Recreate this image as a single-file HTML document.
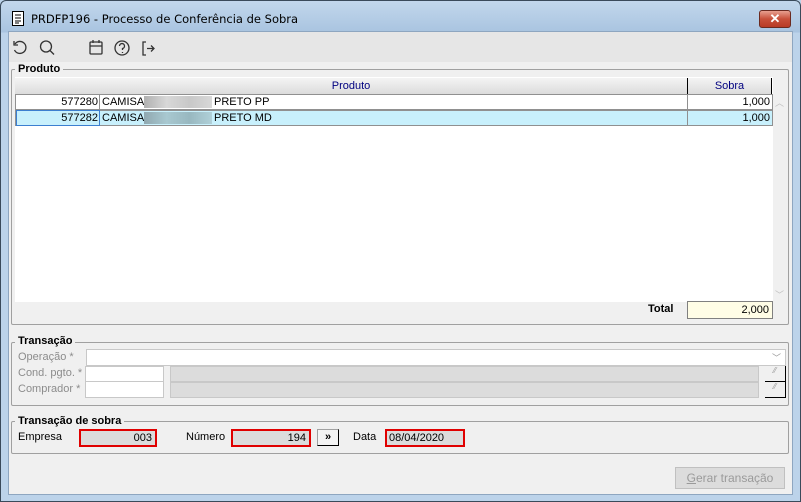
<!DOCTYPE html>
<html><head><meta charset="utf-8"><style>
*{box-sizing:border-box;margin:0;padding:0}
body{width:801px;height:502px;overflow:hidden;background:#bcd3ea;font-family:"Liberation Sans",sans-serif;font-size:11px;color:#000;position:relative}
.a{position:absolute}
.win{left:0;top:0;width:801px;height:502px;border:1px solid #3a4a5a;border-radius:6px 6px 0 0;background:linear-gradient(#c2d7ec,#a9c4e0 31px,#bcd3ea 32px)}
.client{left:8px;top:31px;width:785px;height:464px;background:#f0f0f0;border:1px solid #8ea6c0}
.tb{left:9px;top:32px;width:783px;height:30px;background:#e6e6e6}
.grp{border:1px solid #a0a0a0;border-radius:2px}
.lg{background:#f0f0f0;font-weight:bold;padding:0 3px;font-size:11px}
.lbl{color:#8c8c8c}
.in{background:#fff;border:1px solid #c8c8c8}
.gr{background:#dcdcdc;border:1px solid #c8c8c8}
.red{border:2px solid #e00000;background:#dcdcdc;text-align:right;padding:1px 3px 0 0;line-height:13px}
</style></head><body>
<div class="a win"></div>
<svg class="a" style="left:12px;top:11px" width="12" height="15"><rect x="0.5" y="0.5" width="11" height="14" fill="#fff" stroke="#000"/><path d="M3 4h6M3 7h6M3 10h6M3 12h4" stroke="#000"/></svg>
<div class="a" style="left:31px;top:12px;font-size:12px;color:#000;font-family:'DejaVu Sans',sans-serif;font-size:11.5px">PRDFP196 - Processo de Conferência de Sobra</div>
<div class="a" style="left:759px;top:10px;width:32px;height:18px;border:1px solid #6b2a20;border-radius:3px;background:linear-gradient(#e8a090,#c8503a 50%,#b83a25);color:#fff;font-weight:bold;text-align:center;font-size:13px;line-height:16px">✕</div>
<div class="a client"></div>
<div class="a tb"></div>
<svg class="a" style="left:12px;top:39px" width="150" height="18" fill="none" stroke="#333" stroke-width="1.3">
<path d="M3 5 A6 6 0 1 1 2.5 11"/><path d="M2 2v4h4"/>
<circle cx="34" cy="7.5" r="5.5"/><path d="M38 11.5l4 4"/>
<rect x="78" y="3" width="12" height="12" rx="1"/><path d="M78 7h12M81 1v3M87 1v3"/>
<circle cx="110" cy="9" r="7"/><path d="M107.5 7a2.5 2.5 0 1 1 3 2.5v1.5M110.5 13v1"/>
<path d="M134 3h-3v13h3M135 9.5h7M139 6.5l3 3-3 3"/>
</svg>
<div class="a grp" style="left:11px;top:69px;width:778px;height:256px"></div>
<div class="a lg" style="left:15px;top:63px">Produto</div>
<div class="a" style="left:15px;top:77px;width:758px;height:225px;background:#fff"></div>
<div class="a" style="left:15px;top:78px;width:673px;height:16px;background:linear-gradient(#f4f4f4,#dcdcdc);border-right:1px solid #000;color:#000080;text-align:center;line-height:16px">Produto</div>
<div class="a" style="left:688px;top:78px;width:84px;height:16px;background:linear-gradient(#f4f4f4,#dcdcdc);border-right:1px solid #000;color:#000080;text-align:center;line-height:16px">Sobra</div>
<div class="a" style="left:15px;top:94px;width:758px;height:16px;border:1px solid #909090;background:#fff"></div>
<div class="a" style="left:15px;top:110px;width:758px;height:16px;border:1px solid #909090;background:#c8f0fc"></div>
<div class="a" style="left:99px;top:94px;width:1px;height:32px;background:#909090"></div>
<div class="a" style="left:687px;top:94px;width:1px;height:32px;background:#909090"></div>
<div class="a" style="left:16px;top:110px;width:84px;height:16px;border:1px solid #3c7fd0"></div>
<div class="a" style="left:16px;top:96px;width:82px;text-align:right">577280</div>
<div class="a" style="left:102px;top:96px">CAMISA</div>
<div class="a" style="left:144px;top:96px;width:68px;height:12px;background:linear-gradient(90deg,#b0b0b0,#d8d8d8,#c8c8c8,#d8d8d8)"></div>
<div class="a" style="left:214px;top:96px">PRETO PP</div>
<div class="a" style="left:690px;top:96px;width:80px;text-align:right">1,000</div>
<div class="a" style="left:16px;top:112px;width:82px;text-align:right">577282</div>
<div class="a" style="left:102px;top:112px">CAMISA</div>
<div class="a" style="left:144px;top:112px;width:68px;height:12px;background:linear-gradient(90deg,#90a8b0,#a8c8d0,#98b8c0,#b0d0d8)"></div>
<div class="a" style="left:214px;top:112px">PRETO MD</div>
<div class="a" style="left:690px;top:112px;width:80px;text-align:right">1,000</div>
<div class="a" style="left:775px;top:96px;color:#c0c0c0;font-size:9px">︿</div>
<div class="a" style="left:775px;top:288px;color:#c0c0c0;font-size:9px">﹀</div>
<div class="a" style="left:648px;top:303px;font-weight:bold">Total</div>
<div class="a" style="left:687px;top:301px;width:86px;height:18px;background:#fffde6;border:1px solid #808080;text-align:right;padding:2px 3px 0 0">2,000</div>

<div class="a grp" style="left:11px;top:342px;width:778px;height:64px"></div>
<div class="a lg" style="left:15px;top:335px">Transação</div>
<div class="a lbl" style="left:18px;top:351px">Operação *</div>
<div class="a in" style="left:86px;top:349px;width:700px;height:17px"></div>
<div class="a" style="left:772px;top:351px;color:#999;font-size:9px">﹀</div>
<div class="a lbl" style="left:18px;top:367px">Cond. pgto. *</div>
<div class="a in" style="left:85px;top:366px;width:79px;height:17px"></div>
<div class="a gr" style="left:170px;top:366px;width:589px;height:16px"></div>
<div class="a" style="left:765px;top:366px;width:21px;height:16px;background:#f0f0f0;border-right:1px solid #000;border-bottom:1px solid #000;color:#999;font-size:8px;text-align:center">⁄⁄</div>
<div class="a lbl" style="left:18px;top:383px">Comprador *</div>
<div class="a in" style="left:85px;top:381px;width:79px;height:17px"></div>
<div class="a gr" style="left:170px;top:382px;width:589px;height:16px"></div>
<div class="a" style="left:765px;top:382px;width:21px;height:16px;background:#f0f0f0;border-right:1px solid #000;border-bottom:1px solid #000;color:#999;font-size:8px;text-align:center">⁄⁄</div>

<div class="a grp" style="left:11px;top:421px;width:778px;height:33px"></div>
<div class="a lg" style="left:15px;top:415px">Transação de sobra</div>
<div class="a" style="left:18px;top:431px">Empresa</div>
<div class="a red" style="left:79px;top:429px;width:78px;height:18px">003</div>
<div class="a" style="left:186px;top:431px">Número</div>
<div class="a red" style="left:231px;top:429px;width:80px;height:18px">194</div>
<div class="a" style="left:317px;top:429px;width:22px;height:17px;background:#f4f4f4;border:1px solid #a0a0a0;border-right-color:#000;border-bottom-color:#000;text-align:center;font-weight:bold;line-height:14px">»</div>
<div class="a" style="left:353px;top:431px">Data</div>
<div class="a red" style="left:385px;top:429px;width:80px;height:18px;text-align:left;padding-left:2px">08/04/2020</div>
<div class="a" style="left:675px;top:467px;width:110px;height:22px;border:1px solid #c0c0c0;background:#dcdcdc;color:#9a9a9a;text-align:center;line-height:20px;font-size:12px"><u>G</u>erar transação</div>
</body></html>
